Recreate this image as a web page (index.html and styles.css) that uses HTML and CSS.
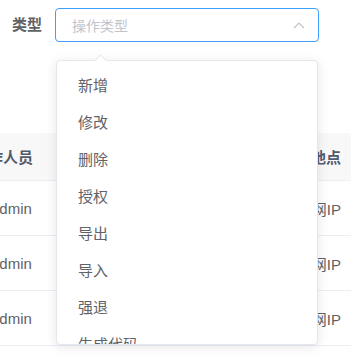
FILE: index.html
```html
<!DOCTYPE html>
<html lang="zh-CN">
<head>
<meta charset="utf-8">
<link rel="stylesheet" href="styles.css">
</head>
<body>
<div class="page">
  <div class="form-row">
    <label class="form-label">类型</label>
    <div class="select">
      <span class="placeholder">操作类型</span>
      <svg class="chevron" width="12" height="7" viewBox="0 0 12 7"><polyline points="1,6 6,1 11,6" fill="none" stroke="#c0c4cc" stroke-width="1.2"/></svg>
    </div>
  </div>

  <div class="table">
    <div class="tr th">
      <div class="cell c1"><span class="h1">操作人员</span></div>
      <div class="cell c2"></div>
      <div class="cell c3">操作地点</div>
    </div>
    <div class="tr">
      <div class="cell c1"><span class="b1">admin</span></div>
      <div class="cell c2"></div>
      <div class="cell c3">内网IP</div>
    </div>
    <div class="tr">
      <div class="cell c1"><span class="b1">admin</span></div>
      <div class="cell c2"></div>
      <div class="cell c3">内网IP</div>
    </div>
    <div class="tr">
      <div class="cell c1"><span class="b1">admin</span></div>
      <div class="cell c2"></div>
      <div class="cell c3">内网IP</div>
    </div>
  </div>

  <div class="dropdown">
    <div class="arrow"></div>
    <ul class="options">
      <li>新增</li>
      <li>修改</li>
      <li>删除</li>
      <li>授权</li>
      <li>导出</li>
      <li>导入</li>
      <li>强退</li>
      <li>生成代码</li>
      <li>清空数据</li>
    </ul>
  </div>
</div>
</body>
</html>
```

FILE: styles.css
```css
* { box-sizing: border-box; }
html, body {
  margin: 0;
  padding: 0;
  background: #fff;
  overflow: hidden;
}
body {
  font-family: "Liberation Sans", "Noto Sans CJK SC", sans-serif;
  color: #606266;
}
.page {
  position: relative;
  width: 351px;
  height: 359px;
  overflow: hidden;
}
.form-row {
  display: flex;
  align-items: center;
  padding: 8px 0 0 12px;
}
.form-label {
  width: 43px;
  font-size: 15px;
  font-weight: bold;
  color: #606266;
  line-height: 34px;
}
.select {
  width: 264px;
  height: 34px;
  border: 1px solid #409eff;
  border-radius: 4px;
  display: flex;
  align-items: center;
  justify-content: space-between;
  padding: 0 13px 0 16px;
}
.placeholder {
  font-size: 14px;
  color: #c0c4cc;
}
.chevron { display: block; }

.table {
  margin-top: 91px;
  margin-left: -40px;
  width: 391px;
}
.tr {
  display: flex;
  height: 55px;
  align-items: center;
  border-bottom: 1px solid #ebeef5;
  font-size: 15px;
}
.tr.th {
  height: 48px;
  background: #f8f8f9;
  color: #515a6e;
  font-weight: bold;
}
.cell { white-space: nowrap; }
.c1 { width: 100px; padding-left: 40px; }
.c2 { flex: 1; }
.c3 { width: 100px; text-align: right; padding-right: 10px; }
.h1 { margin-left: -27px; }
.b1 { margin-left: -9px; }

.dropdown {
  position: absolute;
  left: 56px;
  top: 60px;
  width: 262px;
  height: 285px;
  background: #fff;
  border: 1px solid #e4e7ed;
  border-radius: 4px;
  box-shadow: 0 2px 12px rgba(0, 0, 0, 0.1);
}
.arrow {
  position: absolute;
  left: 39px;
  top: -5px;
  width: 9px;
  height: 9px;
  background: #fff;
  border-top: 1px solid #e4e7ed;
  border-left: 1px solid #e4e7ed;
  transform: rotate(45deg);
}
.options {
  list-style: none;
  margin: 0;
  padding: 6px 0 0;
  height: 100%;
  overflow: hidden;
  border-radius: 4px;
}
.options li {
  height: 37px;
  line-height: 37px;
  padding-left: 21px;
  font-size: 15px;
  color: #606266;
}
```
